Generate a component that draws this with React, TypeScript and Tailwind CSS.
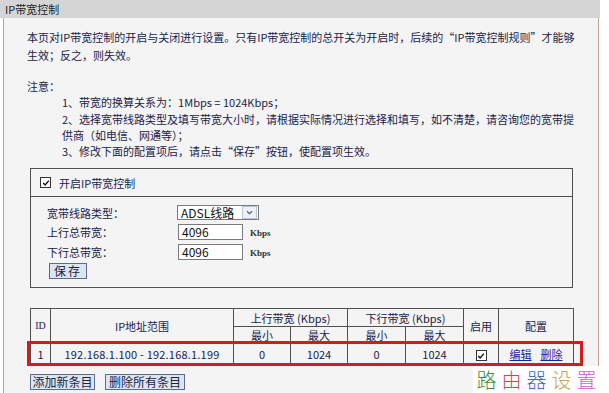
import React from "react";

const cell = "border border-[#505050] text-center p-0 leading-[14px] font-normal";

const CheckMark: React.FC<{ className?: string }> = ({ className }) => (
  <span
    className={`inline-flex items-center justify-center w-[11px] h-[11px] border border-[#333] bg-white ${className ?? ""}`}
  >
    <svg viewBox="0 0 10 10" className="w-[8px] h-[8px]">
      <path d="M1.5 5 L4 7.5 L8.5 2" fill="none" stroke="#111" strokeWidth="1.8" />
    </svg>
  </span>
);

const Button: React.FC<{ children: React.ReactNode; className?: string }> = ({
  children,
  className,
}) => (
  <button
    className={`h-[16px] px-0 bg-[#dbe6f2] border border-[#5c6c88] text-[12px] leading-[14px] text-[#1c2240] whitespace-nowrap ${className ?? ""}`}
  >
    {children}
  </button>
);

export default function App() {
  return (
    <div className="relative w-[609px] h-[393px] overflow-hidden bg-white font-['Noto_Sans_CJK_SC','Liberation_Sans',sans-serif] text-[11px] text-[#20224a]">
      {/* title bar */}
      <div className="w-[600px] h-[18px] bg-[#d5d5d5] pl-[5px] leading-[18px] text-[#222]">
        IP带宽控制
      </div>

      {/* main panel */}
      <div className="ml-[3px] w-[596px] h-[375px] border-l border-r border-[#c99a9a] bg-[#f4f4f4] pl-[23px] pt-[10px]">
        <p className="leading-[18px] whitespace-nowrap">
          本页对IP带宽控制的开启与关闭进行设置。只有IP带宽控制的总开关为开启时，后续的“IP带宽控制规则”才能够
          <br />
          生效；反之，则失效。
        </p>

        <div className="mt-[14px] leading-[16.3px] whitespace-nowrap">
          <div>注意：</div>
          <div className="pl-[35px]">
            <div>1、带宽的换算关系为：1Mbps = 1024Kbps；</div>
            <div>2、选择宽带线路类型及填写带宽大小时，请根据实际情况进行选择和填写，如不清楚，请咨询您的宽带提</div>
            <div>供商（如电信、网通等）；</div>
            <div>3、修改下面的配置项后，请点击“保存”按钮，使配置项生效。</div>
          </div>
        </div>

        {/* switch box */}
        <div className="mt-[9px] ml-[3px] w-[543px] border border-[#505050]">
          <div className="h-[28px] flex items-center gap-[8px] pl-[9px] border-b border-[#505050]">
            <CheckMark />
            <span>开启IP带宽控制</span>
          </div>
          <div className="pl-[16px] pt-[7px] pb-[8px]">
            <div className="flex items-center h-[17px]">
              <span className="w-[130px]">宽带线路类型：</span>
              <div className="flex items-center h-[15px] w-[82px] border border-[#7a7a7a] bg-white">
                <span className="flex-1 pl-[3px] text-[12px] leading-[13px] text-[#111]">ADSL线路</span>
                <span className="flex items-center justify-center w-[15px] h-[13px] mr-[1px] border border-[#b8c4d8] bg-[#eef2f8]">
                  <svg viewBox="0 0 8 6" className="w-[7px] h-[5px]">
                    <path d="M1 1.5 L4 4.5 L7 1.5" fill="none" stroke="#4a5a7a" strokeWidth="1.3" />
                  </svg>
                </span>
              </div>
            </div>
            <div className="flex items-center h-[19px] mt-[1px]">
              <span className="w-[131px]">上行总带宽：</span>
              <div className="w-[65px] h-[16px] border border-[#7a7a7a] bg-white pl-[3px] text-[12px] leading-[14px] text-[#111]">
                4096
              </div>
              <span className="ml-[7px] mt-[2px] text-[9px] leading-[12px] font-['Liberation_Serif',serif] font-bold text-[#333]">
                Kbps
              </span>
            </div>
            <div className="flex items-center h-[19px] mt-[1px]">
              <span className="w-[131px]">下行总带宽：</span>
              <div className="w-[65px] h-[16px] border border-[#7a7a7a] bg-white pl-[3px] text-[12px] leading-[14px] text-[#111]">
                4096
              </div>
              <span className="ml-[7px] mt-[2px] text-[9px] leading-[12px] font-['Liberation_Serif',serif] font-bold text-[#333]">
                Kbps
              </span>
            </div>
            <div className="flex mt-[2px] ml-[2px]">
              <Button className="w-[38px] tracking-[2px]">保存</Button>
            </div>
          </div>
        </div>

        {/* rules table */}
        <div className="relative mt-[20px] ml-[3px] w-[543px]">
          <table className="w-[543px] border-collapse table-fixed">
            <colgroup>
              <col className="w-[20px]" />
              <col className="w-[183px]" />
              <col className="w-[57px]" />
              <col className="w-[57px]" />
              <col className="w-[58px]" />
              <col className="w-[58px]" />
              <col className="w-[35px]" />
              <col className="w-[75px]" />
            </colgroup>
            <thead>
              <tr className="h-[18px]">
                <th rowSpan={2} className={`${cell} font-['Liberation_Serif',serif] font-bold text-[10px]`}>
                  ID
                </th>
                <th rowSpan={2} className={cell}>
                  IP地址范围
                </th>
                <th colSpan={2} className={cell}>
                  上行带宽 (Kbps)
                </th>
                <th colSpan={2} className={cell}>
                  下行带宽 (Kbps)
                </th>
                <th rowSpan={2} className={cell}>
                  启用
                </th>
                <th rowSpan={2} className={cell}>
                  配置
                </th>
              </tr>
              <tr className="h-[17px]">
                <th className={cell}>最小</th>
                <th className={cell}>最大</th>
                <th className={cell}>最小</th>
                <th className={cell}>最大</th>
              </tr>
            </thead>
            <tbody>
              <tr className="h-[20px]">
                <td className={cell}>1</td>
                <td className={`${cell} tracking-[0.2px]`}>192.168.1.100 - 192.168.1.199</td>
                <td className={cell}>0</td>
                <td className={cell}>1024</td>
                <td className={cell}>0</td>
                <td className={cell}>1024</td>
                <td className={cell}>
                  <CheckMark className="align-middle" />
                </td>
                <td className={cell}>
                  <span className="text-[#1a22a8] underline">编辑</span>
                  <span className="ml-[9px] text-[#1a22a8] underline">删除</span>
                </td>
              </tr>
            </tbody>
          </table>
          {/* highlight around the rule row */}
          <div className="absolute left-[-3px] top-[33px] w-[556px] h-[25px] border-[3px] border-[#d8191c] pointer-events-none" />
        </div>

        <div className="mt-[10px] ml-[3px] flex gap-[10px]">
          <Button className="w-[65px]">添加新条目</Button>
          <Button className="w-[80px]">删除所有条目</Button>
        </div>
      </div>

      {/* watermark */}
      <div className="absolute left-[473px] top-[366px] w-[127px] h-[27px] bg-white flex items-center justify-center gap-[5px] text-[20px] leading-none font-['Noto_Sans_CJK_SC',serif] font-light">
        <span className="text-[#3d8a3d]">路</span>
        <span className="text-[#d24848]">由</span>
        <span className="text-[#4a68c0]">器</span>
        <span className="text-[#c9a24a]">设</span>
        <span className="text-[#d25ad2]">置</span>
      </div>
    </div>
  );
}
